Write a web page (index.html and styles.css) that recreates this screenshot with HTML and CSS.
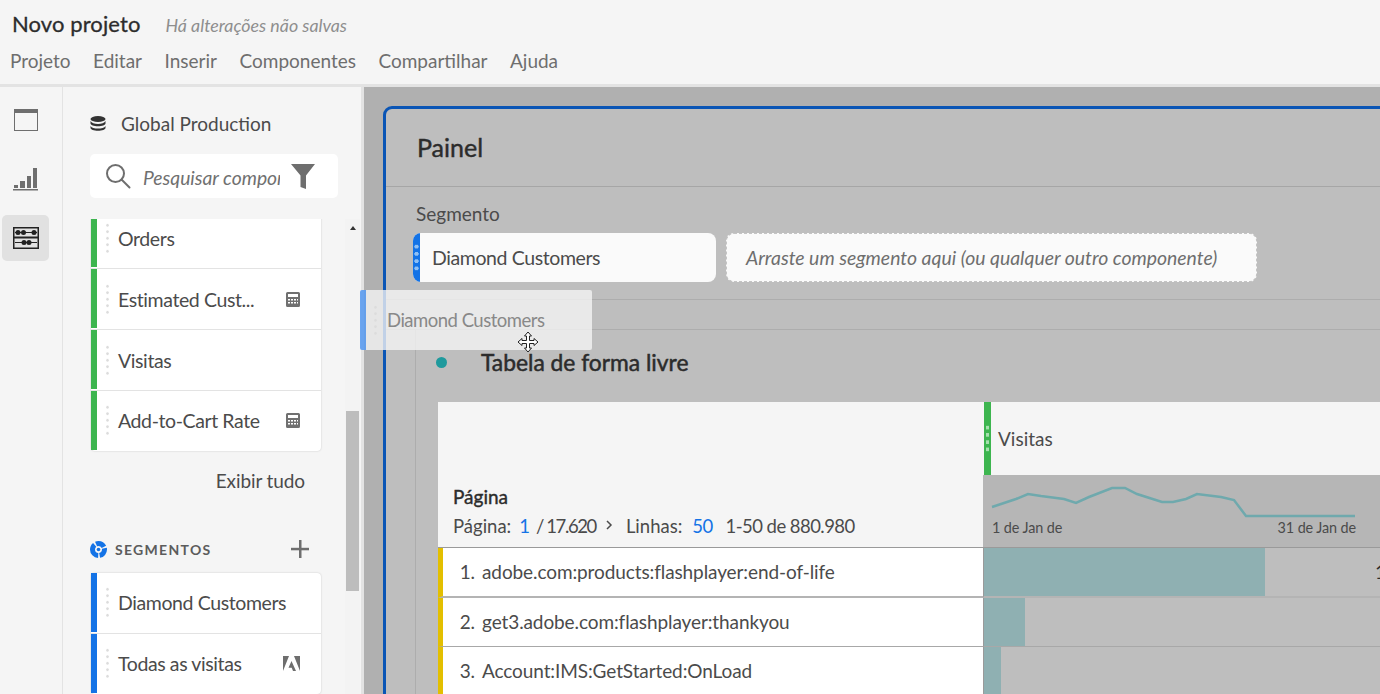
FILE: index.html
```html
<!DOCTYPE html>
<html>
<head>
    <title>Novo projeto</title>
    <link rel="stylesheet" href="styles.css">
</head>
<body>
    <header class="topbar">
        <div class="title-row">
            <h1>Novo projeto</h1>
            <span class="unsaved">Há alterações não salvas</span>
        </div>
        <nav class="menu">
            <a>Projeto</a>
            <a>Editar</a>
            <a>Inserir</a>
            <a>Componentes</a>
            <a>Compartilhar</a>
            <a>Ajuda</a>
        </nav>
    </header>

    <div class="main">
        <aside class="rail">
            <div class="rail-btn">
                <svg width="24" height="22" viewBox="0 0 24 22"><rect x="0.5" y="0.5" width="23" height="21" fill="none" stroke="#6e6e6e"/><rect x="0" y="0" width="24" height="4" fill="#6e6e6e"/></svg>
            </div>
            <div class="rail-btn">
                <svg width="26" height="24" viewBox="0 0 26 24" fill="#6e6e6e"><rect x="1" y="18" width="4" height="3"/><rect x="7" y="14" width="5" height="7"/><rect x="14" y="9" width="4" height="12"/><rect x="20" y="1" width="4" height="20"/><rect x="0" y="22" width="25" height="1.5"/></svg>
            </div>
            <div class="rail-btn active">
                <svg width="26" height="22" viewBox="0 0 26 22" fill="#222"><path d="M0 0h26v22H0z M1.5 1.5v19h23v-19z" fill-rule="evenodd"/><rect x="1" y="9.5" width="24" height="2"/><rect x="2" y="5" width="22" height="1"/><rect x="2" y="15" width="22" height="1"/><circle cx="5" cy="5.5" r="2.5"/><circle cx="10.500" cy="5.5" r="2.5"/><circle cx="21" cy="5.5" r="2.5"/><circle cx="11" cy="15.5" r="2.5"/><circle cx="16" cy="15.5" r="2.5"/></svg>
            </div>
        </aside>

        <section class="components">
            <div class="components-inner">
                <div class="source">
                    <svg width="16" height="15" viewBox="0 0 16 15" fill="#333"><ellipse cx="8" cy="3" rx="7.5" ry="3"/><path d="M0.5 5c1 2 4 3 7.5 3s6.500-1 7.500-3v2.500c0 1.500-3.400 2.700-7.500 2.700S0.500 9 0.500 7.500z"/><path d="M0.500 10c1 2 4 2.600 7.500 2.600s6.500-.6 7.500-2.600v2c0 1.600-3.400 2.800-7.500 2.800S0.500 13.600 0.500 12z"/></svg>
                    <span>Global Production</span>
                </div>
                <div class="search">
                    <svg width="26" height="26" viewBox="0 0 26 26" fill="none" stroke="#6e6e6e" stroke-width="2"><circle cx="10.500" cy="10.500" r="8.500"/><path d="M16.500 16.500l8 8" stroke-linecap="round"/></svg>
                    <span class="search-text">Pesquisar componentes</span>
                    <svg class="funnel" width="24" height="25" viewBox="0 0 24 25" fill="#6e6e6e"><path d="M0 0h24l-9 11.500V25l-5.500-2V11.500z"/></svg>
                </div>
                <div class="scroll-row">
                    <div class="scroll-content">
                        <div class="comp-list scrolled">
                            <div class="comp-item metric"><i class="grip"></i><span class="comp-name">Orders</span></div>
                            <div class="comp-item metric"><i class="grip"></i><span class="comp-name">Estimated Cust...</span>
                                <svg class="calc" width="14" height="15" viewBox="0 0 14 15" fill="#707070"><path d="M1.500 0h11A1.500 1.500 0 0 1 14 1.500v12a1.500 1.500 0 0 1-1.500 1.500h-11A1.500 1.500 0 0 1 0 13.500v-12A1.500 1.500 0 0 1 1.500 0z M2 2v3h10V2z M2 7v1.500h2V7z M5 7v1.500h2V7z M8 7v1.500h2V7z M11 7v1.500h1V7z M2 10v1.500h2V10z M5 10v1.500h2V10z M8 10v1.500h2V10z M11 10v1.500h1V10z" fill-rule="evenodd"/></svg>
                            </div>
                            <div class="comp-item metric"><i class="grip"></i><span class="comp-name">Visitas</span></div>
                            <div class="comp-item metric"><i class="grip"></i><span class="comp-name">Add-to-Cart Rate</span>
                                <svg class="calc" width="14" height="15" viewBox="0 0 14 15" fill="#707070"><path d="M1.500 0h11A1.500 1.500 0 0 1 14 1.500v12a1.500 1.500 0 0 1-1.500 1.500h-11A1.500 1.500 0 0 1 0 13.500v-12A1.500 1.500 0 0 1 1.500 0z M2 2v3h10V2z M2 7v1.500h2V7z M5 7v1.500h2V7z M8 7v1.500h2V7z M11 7v1.500h1V7z M2 10v1.500h2V10z M5 10v1.500h2V10z M8 10v1.500h2V10z M11 10v1.500h1V10z" fill-rule="evenodd"/></svg>
                            </div>
                        </div>
                        <div class="show-all">Exibir tudo</div>
                        <div class="group-head">
                            <svg width="17" height="17" viewBox="0 0 17 17"><circle cx="8.500" cy="8.500" r="6" fill="none" stroke="#1473e6" stroke-width="5" stroke-dasharray="8 1.500 14 1.500 9 1.500"/><circle cx="8.500" cy="8.500" r="1.800" fill="#1473e6"/></svg>
                            <span class="group-label">SEGMENTOS</span>
                            <svg class="plus" width="18" height="18" viewBox="0 0 18 18" fill="#6e6e6e"><rect x="8" y="0" width="2.500" height="18"/><rect x="0" y="7.800" width="18" height="2.500"/></svg>
                        </div>
                        <div class="comp-list">
                            <div class="comp-item segment"><i class="grip"></i><span class="comp-name">Diamond Customers</span></div>
                            <div class="comp-item segment"><i class="grip"></i><span class="comp-name">Todas as visitas</span>
                                <svg class="adobe" width="17" height="15" viewBox="0 0 17 15" fill="#6e6e6e"><path d="M0 0h6L0 15z"/><path d="M11 0h6v15z"/><path d="M8.500 5l4.500 10h-3l-1.300-3.300H5.500z"/></svg>
                            </div>
                        </div>
                    </div>
                    <div class="scrollbar">
                        <span class="arrow-up"></span>
                        <div class="thumb"></div>
                    </div>
                </div>
            </div>
        </section>

        <main class="workspace">
            <div class="panel">
                <div class="panel-title">Painel</div>
                <div class="dropzone">
                    <div class="dropzone-label">Segmento</div>
                    <div class="chips">
                        <div class="chip"><i class="chip-handle"></i><span>Diamond Customers</span></div>
                        <div class="chip-empty">Arraste um segmento aqui (ou qualquer outro componente)</div>
                    </div>
                </div>
                <div class="spacer-strip"></div>
                <div class="freeform">
                    <div class="freeform-title"><i class="dot"></i><span>Tabela de forma livre</span></div>
                    <div class="table">
                        <div class="head-left">
                            <div class="dim-name">Página</div>
                            <div class="pager">
                                <span>Página:</span><b class="page-no">1</b><span class="num">/ 17.620</span>
                                <svg width="7" height="10" viewBox="0 0 7 10" fill="none" stroke="#4b4b4b" stroke-width="1.500"><path d="M1 1l4 4-4 4"/></svg>
                                <span>Linhas:</span><b class="rows-count">50</b><span class="range">1-50 de 880.980</span>
                            </div>
                        </div>
                        <div class="head-metric"><i class="metric-handle"></i><span>Visitas</span></div>
                        <div class="head-spark">
                            <svg class="spark" width="396" height="50" viewBox="984 476 396 50"><polyline fill="none" stroke="#6fa9ad" stroke-width="2.500" points="993,507 1017,499 1029,494 1042,496 1065,499 1077,503 1090,497 1113,488 1126,488 1138,494 1163,502 1174,502 1187,499 1198,494 1222,497 1235,500 1247,516 1356,516"/></svg>
                            <div class="spark-dates"><span>1 de Jan de</span><span>31 de Jan de</span></div>
                        </div>

                        <div class="row-name first"><span class="row-num">1.</span><span>adobe.com:products:flashplayer:end-of-life</span></div>
                        <div class="row-bar first"><div class="bar" style="width: 281px"></div><span class="row-value">1</span></div>
                        <div class="row-name"><span class="row-num">2.</span><span>get3.adobe.com:flashplayer:thankyou</span></div>
                        <div class="row-bar"><div class="bar" style="width: 41px"></div></div>
                        <div class="row-name"><span class="row-num">3.</span><span>Account:IMS:GetStarted:OnLoad</span></div>
                        <div class="row-bar"><div class="bar" style="width: 17px"></div></div>
                    </div>
                </div>
            </div>
        </main>
    </div>

    <!-- item being dragged -->
    <div class="drag-ghost"><i class="grip"></i><span>Diamond Customers</span></div>
    <svg class="move-cursor" width="22" height="22" viewBox="0 0 22 22"><path d="M11 1l3.500 4H12.500v4.500H17V7.500l4 3.500-4 3.500v-2H12.500V17h2L11 21l-3.500-4h2v-4.500H5v2L1 11l4-3.500v2h4.500V5h-2z" fill="#fff" stroke="#222" stroke-width="1"/></svg>
</body>
</html>
```

FILE: styles.css
```css
body {
    margin: 0;
    height: 694px;
    overflow: hidden;
    position: relative;
    font-family: 'Lato', 'Open Sans', sans-serif;
    color: #4b4b4b;
    background-color: #f5f5f5;
    display: flex;
    flex-direction: column;
}

/* top bar */
.topbar {
    flex: none;
    box-sizing: border-box;
    height: 87px;
    padding: 10px 0 0 12px;
    background-color: #f5f5f5;
    border-bottom: 3px solid #e3e3e3;
}

.title-row {
    display: flex;
    align-items: baseline;
    gap: 25px;
    height: 29px;
}

h1 {
    margin: 0;
    font-size: 22px;
    font-weight: 400;
    letter-spacing: 0.1px;
    color: #2c2c2c;
    -webkit-text-stroke: 0.3px #2c2c2c;
}

.unsaved {
    font-size: 17.8px;
    font-style: italic;
    color: #8e8e8e;
}

.menu {
    display: flex;
    gap: 22.5px;
    margin: 10px 0 0 -2px;
    font-size: 19px;
    color: #6e6e6e;
}

.main {
    flex: 1;
    min-height: 0;
    display: flex;
}

/* icon rail */
.rail {
    width: 63px;
    flex: none;
    box-sizing: border-box;
    padding: 10px 0 0 2px;
    border-right: 1px solid #e3e3e3;
    display: flex;
    flex-direction: column;
    gap: 13px;
}

.rail-btn {
    width: 47px;
    height: 46px;
    border-radius: 5px;
    display: flex;
    align-items: center;
    justify-content: center;
}

.rail-btn.active {
    background-color: #e1e1e1;
}

/* components panel */
.components {
    width: 301px;
    flex: none;
    box-sizing: border-box;
    border-right: 3px solid #e3e3e3;
    overflow: hidden;
}

.components-inner {
    padding: 26px 0 0 27px;
    display: flex;
    flex-direction: column;
}

.source {
    display: flex;
    align-items: center;
    gap: 15px;
    height: 20px;
    font-size: 19px;
}

.search {
    width: 248px;
    height: 44px;
    margin-top: 21px;
    box-sizing: border-box;
    padding: 0 22px 0 15px;
    background-color: #fff;
    border-radius: 5px;
    display: flex;
    align-items: center;
}

.search-text {
    width: 137px;
    height: 24px;
    margin: 3px 0 0 12px;
    overflow: hidden;
    white-space: nowrap;
    font-size: 19.3px;
    font-style: italic;
    color: #707070;
}

.funnel {
    margin-left: 11px;
}

.scroll-row {
    display: flex;
    margin-top: 21px;
    height: 476px;
    overflow: hidden;
}

.scroll-content {
    width: 255px;
    flex: none;
}

.comp-list {
    width: 230px;
    margin-left: 1px;
    margin-right: 24px;
    background-color: #fff;
    border-radius: 4px;
    box-shadow: 0 0 2px rgba(0, 0, 0, 0.2);
}

.comp-list.scrolled {
    margin-top: -11px;
}

.comp-item {
    height: 61px;
    box-sizing: border-box;
    display: flex;
    align-items: center;
    padding: 0 21px 0 6px;
    position: relative;
    border-bottom: 1px solid #e3e3e3;
}

.comp-item:last-child {
    border-bottom: 0;
    height: 60px;
    padding-bottom: 2px;
}

.comp-item.segment {
    padding-bottom: 2px;
}

.comp-item::before {
    content: "";
    position: absolute;
    left: 0;
    top: 0;
    bottom: 1px;
    width: 6px;
}

.metric::before {
    background-color: #3db54f;
}

.segment::before {
    background-color: #1473e6;
}

.grip {
    width: 3px;
    height: 32.5px;
    margin-left: 9px;
    flex: none;
    background-image: radial-gradient(circle, #dcdcdc 1.3px, transparent 1.4px);
    background-size: 3px 6.5px;
}

.comp-name {
    margin-left: 9px;
    flex: 1;
    font-size: 19.5px;
    letter-spacing: -0.4px;
    white-space: nowrap;
}

.show-all {
    width: 215px;
    margin-top: 18px;
    text-align: right;
    font-size: 19px;
    letter-spacing: -0.1px;
}

.group-head {
    display: flex;
    align-items: center;
    margin-top: 47px;
    height: 20px;
    width: 219px;
}

.group-label {
    margin-left: 8px;
    flex: 1;
    font-size: 14px;
    font-weight: 700;
    letter-spacing: 1.3px;
    color: #5c5c5c;
}

.group-head + .comp-list {
    margin-top: 14px;
}

.scrollbar {
    width: 15px;
    background-color: #f3f3f3;
    display: flex;
    flex-direction: column;
    align-items: center;
}

.arrow-up {
    margin-top: 7px;
    border-left: 3.5px solid transparent;
    border-right: 3.5px solid transparent;
    border-bottom: 4px solid #333;
}

.thumb {
    width: 13px;
    height: 180px;
    margin-top: 181px;
    background-color: #bdbdbd;
}

/* workspace */
.workspace {
    flex: 1;
    min-width: 0;
    overflow: hidden;
    background-color: #b0b0b0;
    padding: 19px 0 0 19px;
}

.panel {
    width: 1200px;
    height: 700px;
    box-sizing: border-box;
    background-color: #bebebe;
    border: 3px solid #0a55b5;
    border-radius: 9px;
}

.panel-title {
    height: 78px;
    box-sizing: border-box;
    padding: 23px 0 0 31px;
    font-size: 25px;
    color: #2c2c2c;
    -webkit-text-stroke: 0.4px #2c2c2c;
    border-bottom: 1px solid #a6a6a6;
}

.dropzone {
    height: 113px;
    box-sizing: border-box;
    padding: 15px 0 0 27px;
    border-bottom: 1px solid #adadad;
}

.dropzone-label {
    margin-left: 3px;
    font-size: 19px;
    height: 31px;
}

.chips {
    display: flex;
    gap: 10px;
}

.chip {
    width: 303px;
    height: 49px;
    box-sizing: border-box;
    padding-left: 19px;
    position: relative;
    background-color: #fafafa;
    border-radius: 8px;
    overflow: hidden;
    display: flex;
    align-items: center;
    font-size: 19.5px;
    letter-spacing: -0.4px;
}

.chip-handle {
    position: absolute;
    left: 0;
    top: 0;
    bottom: 0;
    width: 7px;
    background-color: #1473e6;
    display: flex;
    align-items: center;
    justify-content: center;
}

.chip-handle::after,
.metric-handle::after {
    content: "";
    width: 5px;
    height: 29px;
    background-image: radial-gradient(circle, #8fc0f5 2px, transparent 2.2px);
    background-size: 5px 7.25px;
}

.chip-empty {
    width: 531px;
    height: 49px;
    box-sizing: border-box;
    padding-left: 19px;
    background-color: #fafafa;
    border: 1px dashed #c4c4c4;
    border-radius: 8px;
    display: flex;
    align-items: center;
    font-size: 19.4px;
    font-style: italic;
    color: #6e6e6e;
}

.spacer-strip {
    height: 30px;
    box-sizing: border-box;
    border-bottom: 1px solid #adadad;
}

.freeform {
    margin-left: 29px;
    border-left: 1px solid #adadad;
    padding-left: 22px;
}

.freeform-title {
    display: flex;
    align-items: center;
    box-sizing: border-box;
    height: 72px;
    padding-bottom: 8px;
    font-size: 22.8px;
    color: #2c2c2c;
    -webkit-text-stroke: 0.5px #2c2c2c;
    gap: 34px;
}

.dot {
    width: 11px;
    height: 11px;
    margin-left: -2px;
    margin-top: 1px;
    border-radius: 50%;
    background-color: #1f9a9d;
}

.table {
    display: grid;
    grid-template-columns: 545px 1fr;
    grid-template-rows: 73px 73px 50px 49px 49px;
}

.head-left {
    grid-row: 1 / 3;
    background-color: #f5f5f5;
    box-sizing: border-box;
    padding: 83px 0 0 15px;
    border-bottom: 1px solid #9a9a9a;
}

.dim-name {
    font-size: 19px;
    color: #2c2c2c;
    -webkit-text-stroke: 0.4px #2c2c2c;
}

.pager {
    display: flex;
    align-items: center;
    margin-top: 7px;
    font-size: 18.5px;
    gap: 9px;
}

.pager b {
    font-weight: 400;
    color: #1473e6;
}

.pager .page-no {
    margin: 0 -3px 0 -1px;
}

.pager .num {
    letter-spacing: -1.4px;
}

.pager .rows-count {
    margin-left: 1px;
    letter-spacing: -0.6px;
}

.pager .range {
    letter-spacing: -0.55px;
    margin-left: 4px;
}

.pager svg {
    margin: 0 4px 2px 1px;
}

.head-metric {
    background-color: #f5f5f5;
    display: flex;
    align-items: center;
    padding-left: 1px;
    font-size: 19px;
}

.metric-handle {
    align-self: stretch;
    width: 7px;
    margin-right: 7px;
    background-color: #3db54f;
    display: flex;
    align-items: center;
    justify-content: center;
}

.metric-handle::after {
    background-image: radial-gradient(circle, #a6e0ae 1.8px, transparent 2px);
}

.head-spark {
    background-color: #b6b6b6;
    border-bottom: 1px solid #9a9a9a;
    padding-top: 1px;
    box-sizing: border-box;
}

.spark {
    display: block;
}

.spark-dates {
    width: 364px;
    margin: -7px 0 0 9px;
    display: flex;
    justify-content: space-between;
    font-size: 14.4px;
    letter-spacing: -0.1px;
}

.row-name {
    background-color: #fff;
    border-left: 5px solid #e3bf00;
    display: flex;
    align-items: center;
    font-size: 19px;
    letter-spacing: -0.1px;
    box-sizing: border-box;
    padding-bottom: 2px;
    border-bottom: 1px solid #a8a8a8;
}

.row-name.first,
.row-bar.first {
    border-bottom: 2px solid #b4b4b4;
}

.row-num {
    width: 32px;
    margin-right: 7px;
    text-align: right;
}

.row-bar {
    background-color: #bebebe;
    border-bottom: 1px solid #a8a8a8;
    border-left: 1px solid #9a9a9a;
    display: flex;
    position: relative;
    box-sizing: border-box;
}

.bar {
    background-color: #8fb0b2;
}

.row-value {
    position: absolute;
    left: 391px;
    top: 12px;
    font-size: 19px;
    color: #2c2c2c;
}

/* drag overlay */
.drag-ghost {
    position: absolute;
    left: 360px;
    top: 290px;
    width: 232px;
    height: 60px;
    box-sizing: border-box;
    background-color: rgba(245, 245, 245, 0.78);
    border-left: 6px solid rgba(30, 120, 235, 0.65);
    border-radius: 2px;
    display: flex;
    align-items: center;
    font-size: 18.5px;
    letter-spacing: -0.5px;
    color: #888;
}

.drag-ghost .grip {
    margin-left: 8px;
    margin-right: 10px;
}

.move-cursor {
    position: absolute;
    left: 517px;
    top: 331px;
}
```
